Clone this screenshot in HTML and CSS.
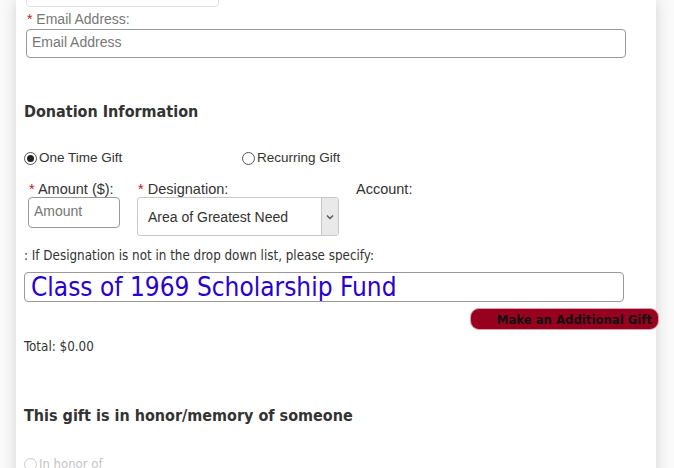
FILE: index.html
```html
<!DOCTYPE html>
<html lang="en">
<head>
  <meta charset="UTF-8">
  <title>Donation Form</title>
  <link rel="stylesheet" href="styles.css">
</head>
<body>
  <form class="card">
    <input class="field prev-field" type="text" aria-label="Phone">

    <label class="field-label" for="email"><span class="req">*</span> Email Address:</label>
    <input class="field" type="email" id="email" placeholder="Email Address">

    <h3 class="section-title">Donation Information</h3>

    <div class="gift-type">
      <label class="radio"><span class="dot checked"></span>One Time Gift</label>
      <label class="radio"><span class="dot"></span>Recurring Gift</label>
    </div>

    <div class="amount-row">
      <div class="col col-amount">
        <label class="small-label" for="amount"><span class="req">*</span> Amount ($):</label>
        <input class="field amount" type="text" id="amount" placeholder="Amount">
      </div>
      <div class="col col-designation">
        <label class="small-label" for="designation"><span class="req">*</span> Designation:</label>
        <div class="select">
          <span class="select-value">Area of Greatest Need</span>
          <span class="select-arrow">
            <svg width="8" height="6" viewBox="0 0 8 6"><path d="M1 1.5 L4 4.5 L7 1.5" fill="none" stroke="#555" stroke-width="1.4"/></svg>
          </span>
        </div>
      </div>
      <div class="col col-account">
        <span class="small-label">Account:</span>
      </div>
    </div>

    <p class="note">: If Designation is not in the drop down list, please specify:</p>
    <input class="field specify" type="text" value="Class of 1969 Scholarship Fund">

    <div class="button-row">
      <button type="button" class="add-gift">Make an Additional Gift</button>
    </div>

    <p class="total">Total: $0.00</p>

    <h3 class="section-title honor-title">This gift is in honor/memory of someone</h3>

    <label class="radio faded"><span class="dot"></span>In honor of</label>
  </form>
</body>
</html>
```

FILE: styles.css
```css
* {
  box-sizing: border-box;
  margin: 0;
  padding: 0;
}

body {
  height: 468px;
  overflow: hidden;
  background: #fafafa;
  font-family: "Liberation Sans", Arial, sans-serif;
  color: #333;
}

.card {
  width: 640px;
  margin-left: 16px;
  min-height: 520px;
  background: #fff;
  box-shadow: 0 0 14px rgba(0, 0, 0, 0.16);
  padding: 0 8px;
  display: flex;
  flex-direction: column;
  align-items: flex-start;
}

.field {
  display: block;
  border: 1px solid #999;
  border-radius: 4px;
  background: #fff;
  font-family: "Liberation Sans", Arial, sans-serif;
  font-size: 14px;
  color: #333;
  padding: 0 5px;
  outline: none;
}

.field::placeholder {
  color: #777;
}

.prev-field {
  width: 193px;
  height: 30px;
  margin-top: -23px;
  margin-left: 2px;
  border-color: #e2e2e2;
}

.field-label {
  margin-top: 4px;
  margin-left: 3px;
  font-size: 14px;
  line-height: 16px;
  color: #777;
}

.req {
  color: #c4161c;
}

#email {
  width: 600px;
  height: 29px;
  margin-top: 2px;
  margin-left: 2px;
  padding-bottom: 4px;
}

.section-title {
  font-family: "DejaVu Sans Condensed", "DejaVu Sans", sans-serif;
  font-size: 16px;
  font-weight: bold;
  color: #333;
  line-height: 20px;
  margin-top: 44px;
}

.gift-type {
  display: flex;
  margin-top: 28px;
}

.radio {
  display: flex;
  align-items: center;
  gap: 2px;
  font-size: 13.5px;
  line-height: 16px;
  color: #333;
}

.gift-type .radio:first-child {
  width: 218px;
}

.dot {
  width: 13px;
  height: 13px;
  border: 1px solid #555;
  border-radius: 50%;
  display: flex;
  align-items: center;
  justify-content: center;
}

.dot.checked::after {
  content: "";
  width: 7px;
  height: 7px;
  border-radius: 50%;
  background: #222;
}

.amount-row {
  display: flex;
  margin-top: 15px;
  margin-left: 4px;
}

.col {
  display: flex;
  flex-direction: column;
}

.col-amount {
  width: 109px;
}

.col-designation {
  width: 218px;
}

.small-label {
  font-size: 14.5px;
  line-height: 16px;
  color: #333;
  margin-left: 1px;
}

.amount {
  width: 92px;
  height: 31px;
  padding-bottom: 4px;
}

.select {
  width: 202px;
  height: 39px;
  border: 1px solid #c8c8c8;
  border-radius: 3px;
  display: flex;
  align-items: center;
  justify-content: space-between;
  font-size: 14px;
  color: #333;
  overflow: hidden;
}

.select-value {
  padding-left: 10px;
  padding-top: 1px;
}

.select-arrow {
  width: 17px;
  height: 100%;
  background: #e9e9e9;
  border-left: 1px solid #c8c8c8;
  display: flex;
  align-items: center;
  justify-content: center;
}

.note {
  font-family: "DejaVu Sans Condensed", "DejaVu Sans", sans-serif;
  font-size: 13.3px;
  line-height: 16px;
  margin-top: 12px;
}

.specify {
  width: 600px;
  height: 30px;
  margin-top: 8px;
  font-family: "DejaVu Sans Condensed", "DejaVu Sans", sans-serif;
  font-size: 26px;
  color: #2a00d0;
  padding: 0 6px 1px;
}

.button-row {
  align-self: stretch;
  display: flex;
  justify-content: flex-end;
  margin-right: -11px;
  margin-top: 6px;
}

.add-gift {
  width: 189px;
  height: 22px;
  background: #98001f;
  border: 1px solid #e0a0aa;
  border-radius: 9px;
  font-family: "DejaVu Sans Condensed", "DejaVu Sans", sans-serif;
  font-size: 13px;
  font-weight: bold;
  color: #111;
  text-align: right;
  padding-right: 6px;
}

.total {
  font-family: "DejaVu Sans Condensed", "DejaVu Sans", sans-serif;
  font-size: 13.3px;
  line-height: 16px;
  margin-top: 9px;
}

.honor-title {
  margin-top: 51px;
}

.faded {
  margin-top: 30px;
  color: #c4c4c4;
  font-family: "DejaVu Sans Condensed", "DejaVu Sans", sans-serif;
  font-size: 13px;
}

.faded .dot {
  border-color: #ccc;
}
```
